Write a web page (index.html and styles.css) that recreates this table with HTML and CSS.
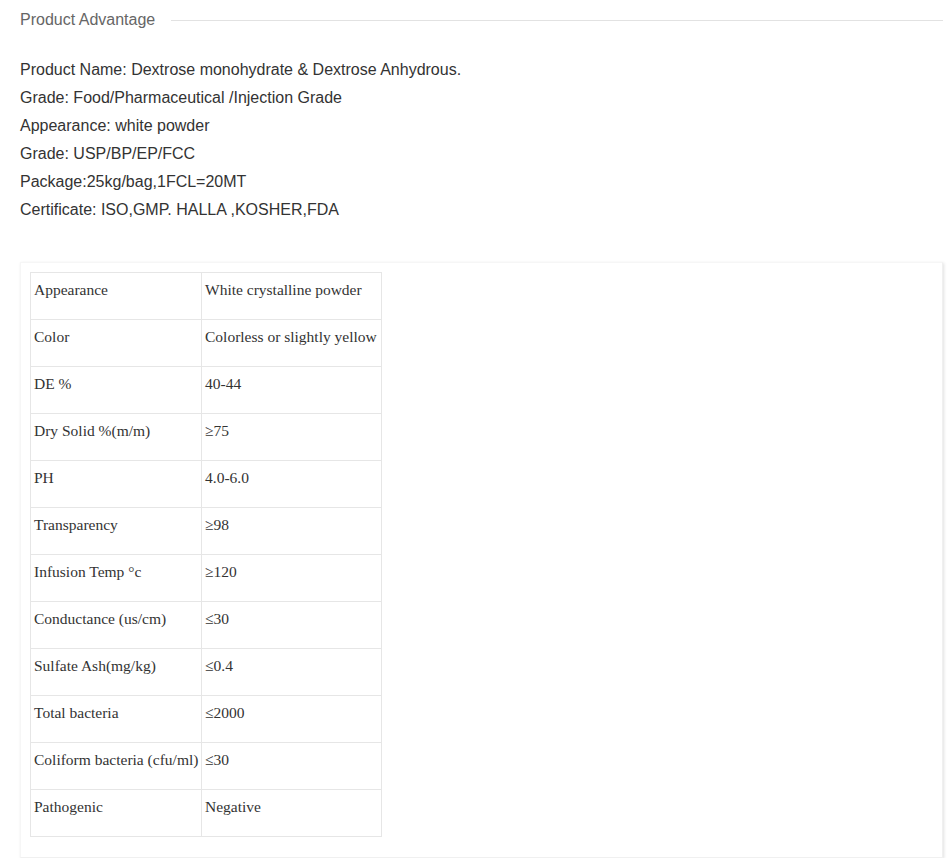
FILE: index.html
```html
<!DOCTYPE html>
<html lang="en">
<head>
  <meta charset="UTF-8">
  <title>Product Advantage</title>
  <link rel="stylesheet" href="styles.css">
</head>
<body>
  <!-- Section title with a rule to the right -->
  <div class="section-title">
    <span>Product Advantage</span>
    <div class="title-line"></div>
  </div>

  <!-- Short product summary -->
  <div class="summary">
    <p>Product Name: Dextrose monohydrate &amp; Dextrose Anhydrous.</p>
    <p>Grade: Food/Pharmaceutical /Injection Grade</p>
    <p>Appearance: white powder</p>
    <p>Grade: USP/BP/EP/FCC</p>
    <p>Package:25kg/bag,1FCL=20MT</p>
    <p>Certificate: ISO,GMP. HALLA ,KOSHER,FDA</p>
  </div>

  <!-- Spec table inside a card -->
  <div class="spec-card">
    <table class="spec-table">
      <colgroup><col class="col-name"><col class="col-value"></colgroup>
      <tr><td>Appearance</td><td>White crystalline powder</td></tr>
      <tr><td>Color</td><td>Colorless or slightly yellow</td></tr>
      <tr><td>DE %</td><td>40-44</td></tr>
      <tr><td>Dry Solid %(m/m)</td><td>&ge;75</td></tr>
      <tr><td>PH</td><td>4.0-6.0</td></tr>
      <tr><td>Transparency</td><td>&ge;98</td></tr>
      <tr><td>Infusion Temp &deg;c</td><td>&ge;120</td></tr>
      <tr><td>Conductance (us/cm)</td><td>&le;30</td></tr>
      <tr><td>Sulfate Ash(mg/kg)</td><td>&le;0.4</td></tr>
      <tr><td>Total bacteria</td><td>&le;2000</td></tr>
      <tr><td>Coliform bacteria (cfu/ml)</td><td>&le;30</td></tr>
      <tr><td>Pathogenic</td><td>Negative</td></tr>
    </table>
  </div>
</body>
</html>
```

FILE: styles.css
```css
/* Basic page setup */
body {
  margin: 0;
  padding: 9px 6px 0 20px;
  font-family: "Liberation Sans", Arial, sans-serif;
  background: #fff;
  color: #333;
}

/* Title with line to the right */
.section-title {
  display: flex;
  align-items: center;
  height: 22px;
  font-size: 16px;
  color: #666;
}

.title-line {
  flex: 1;
  height: 1px;
  background: #e2e2e2;
  margin-left: 16px;
}

/* Summary lines */
.summary {
  margin-top: 25px;
}

.summary p {
  margin: 0;
  font-size: 16px;
  line-height: 28px;
  color: #333;
}

/* Card around the table */
.spec-card {
  margin-top: 38px;
  padding: 9px 9px 20px;
  background: #fff;
  border: 1px solid #f0f0f0;
  border-top-color: #f6f6f6;
  border-left-color: #f6f6f6;
  box-shadow: 1px 1px 3px rgba(0,0,0,0.12);
}

.spec-table {
  border-collapse: collapse;
  table-layout: fixed;
  width: 351px;
  font-family: "Liberation Serif", "Times New Roman", serif;
  font-size: 15.5px;
  color: #333;
}

.spec-table .col-name {
  width: 171px;
}

.spec-table .col-value {
  width: 180px;
}

.spec-table td {
  border: 1px solid #e6e6e6;
  padding: 8px 3px 21px;
  line-height: 17px;
  vertical-align: top;
  white-space: nowrap;
  overflow: hidden;
}
```
